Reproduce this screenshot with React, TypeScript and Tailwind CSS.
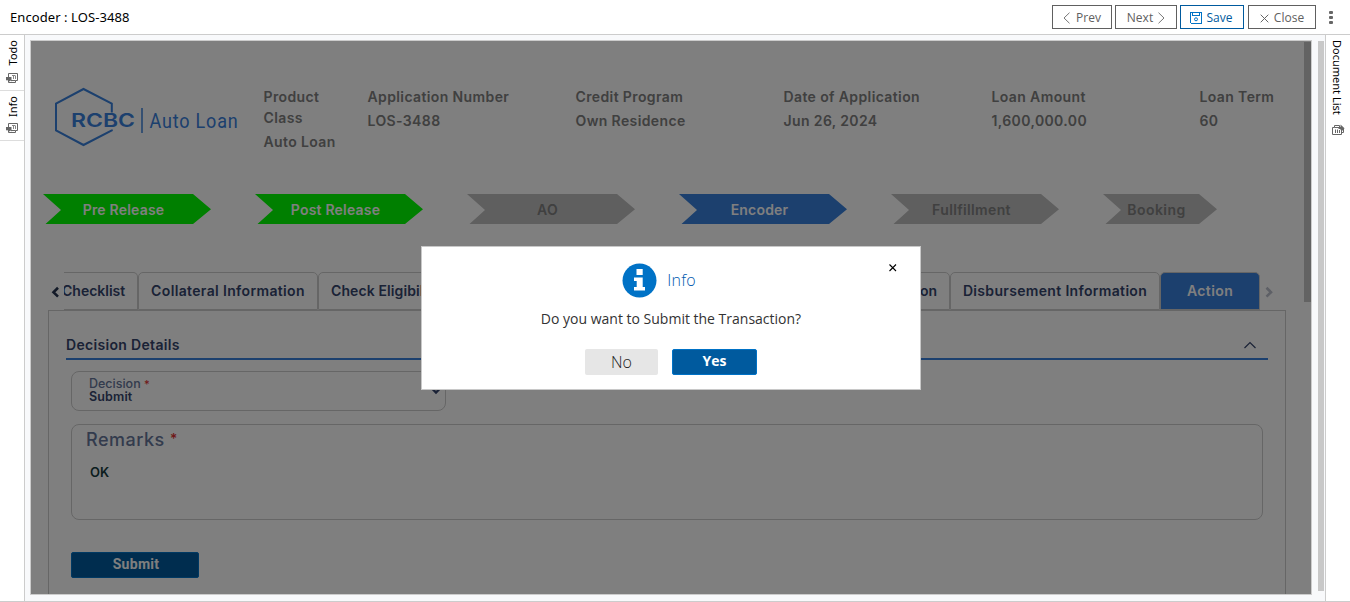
import React from "react";

const Chevron = ({ label, fill, text, width = 168 }: { label: string; fill: string; text: string; width?: number }) => (
  <div className="relative h-[30px] shrink-0" style={{ width }}>
    <svg className="absolute inset-0" width={width} height="30">
      <polygon className={fill} points={`0,0 ${width - 18},0 ${width},15.3 ${width - 18},30 2.5,30 18,16`} />
    </svg>
    <div className={`relative mr-[7px] text-center leading-8 ${text}`}>{label}</div>
  </div>
);

const Field = ({ label, value, width }: { label: string; value: string; width: string }) => (
  <div className={`${width} shrink-0`}>
    <div className="mb-[3px] leading-[21px]">{label}</div>
    <div className="leading-[21px]">{value}</div>
  </div>
);

const TabIcon = () => (
  <svg width="12" height="11" viewBox="0 0 12 11" className="fill-none stroke-[#666]" strokeWidth="1">
    <path d="M2.5 4V.5H11.5V7.5H9.5V9.5H2.5V7.5M5 7.5H9.5M.5 4.5V7" />
    <path d="M6 2.5H9.5M7.5 3V6M9.5 3V6" strokeWidth=".8" />
    <path className="fill-[#666]" stroke="none" d="M0 4H5.5V8.5L4.3 7.5L3 8.8L1.2 7L0 7.5Z" />
  </svg>
);

const DocIcon = () => (
  <svg width="13" height="12" viewBox="0 0 13 12" className="fill-none stroke-[#666]" strokeWidth="1">
    <path d="M2.5 3.5H.5V10.5H9.5V3.5H2.5M2.5 3.5V1.5H7.5V3.5M9.5 8.5H11.5V5" />
    <path d="M3.5 5.5V9M5.5 5.5V9M7.5 6V9" />
    <path className="fill-[#666]" stroke="none" d="M8.5 .5L12.5 4.2L11 6.5L8.5 6V5H6.5V3H8.5Z" />
  </svg>
);

const tab = "h-[38px] shrink-0 rounded-t-[5px] border border-[#ccc] text-center text-[14px] leading-[36px]";
const topButton = "flex h-6 items-center justify-center border border-[#606060] text-[12px] text-[#606060]";

export default function App() {
  return (
    <div className="flex h-[602px] w-[1350px] flex-col overflow-hidden border-b border-[#ccc] bg-white font-['Open_Sans',sans-serif]">
      <header className="flex h-[35px] shrink-0 items-center border-b border-[#ccc] pl-[10px]">
        <h1 className="pt-0.5 font-['Noto_Sans',sans-serif] text-[13px] tracking-[.08px] text-black">Encoder : LOS-3488</h1>
        <div className="ml-auto flex items-center">
          <button className={`${topButton} mr-[3px] w-[60px] gap-[6px]`}>
            <svg width="7" height="12" className="mt-0.5 fill-none stroke-[#777]"><path d="M6.5 .7L1 6L6.5 11.3" /></svg>
            <span className="pt-0.5">Prev</span>
          </button>
          <button className={`${topButton} mr-[3px] w-[62px] gap-[5px]`}>
            <span className="pt-0.5">Next</span>
            <svg width="7" height="12" className="mt-0.5 fill-none stroke-[#777]"><path d="M.5 .7L6 6L.5 11.3" /></svg>
          </button>
          <button className="mr-1 flex h-6 w-16 items-center justify-center gap-[5px] border border-[#005a9e] pr-0.5 text-[12px] text-[#005a9e]">
            <svg width="12" height="12" shapeRendering="crispEdges" className="mt-px fill-none stroke-[#0072c6]">
              <path d="M.5 .5H11.5V11.5H1.5L.5 10.5ZM2.5 .5V3.5H9.5V.5" /><circle cx="6" cy="7.3" r="1.5" shapeRendering="auto" />
            </svg>
            <span className="pt-0.5">Save</span>
          </button>
          <button className={`${topButton} w-[68px] gap-[5px]`}>
            <svg width="9" height="9" className="mt-0.5 fill-none stroke-[#666]"><path d="M.7 .7L8.3 8.3M8.3 .7L.7 8.3" /></svg>
            <span className="pt-0.5">Close</span>
          </button>
          <div className="ml-[13px] mr-[17px] flex w-1 flex-col gap-[2px]">
            <i className="h-[3px] w-[4px] rounded-[1px] bg-[#666]" />
            <i className="h-[3px] w-[4px] rounded-[1px] bg-[#666]" />
            <i className="h-[3px] w-[4px] rounded-[1px] bg-[#666]" />
          </div>
        </div>
      </header>

      <div className="flex min-h-0 flex-1">
        <aside className="w-[25px] shrink-0 border-r border-[#ccc] text-[11px] text-black">
          <div className="flex h-14 flex-col items-center justify-between border-b border-[#ddd] pt-[5px] pb-[6px]">
            <span className="ml-0.5 rotate-180 font-['Noto_Sans',sans-serif] leading-4 [writing-mode:vertical-rl]">Todo</span>
            <TabIcon />
          </div>
          <div className="flex h-[50px] flex-col items-center justify-between border-b border-[#ddd] pt-[5px] pb-[6px]">
            <span className="ml-0.5 rotate-180 font-['Noto_Sans',sans-serif] leading-4 [writing-mode:vertical-rl]">Info</span>
            <TabIcon />
          </div>
        </aside>

        <main className="flex min-w-0 flex-1 bg-[#f8f9fb] pt-[5px] pl-[5px]">
          <div className="relative h-[555px] w-[1282px] shrink-0 overflow-hidden border border-[#ccc] bg-white font-['Inter',sans-serif] font-semibold">
            <div className="flex h-[153px] pt-[45px] pl-[23px]">
              <svg width="186" height="62" className="shrink-0 fill-none stroke-[#3880dc] text-[#3880dc]">
                <path strokeWidth="2" d="M57.8 26.5V17.5L29.5 3L2 17.5V44.5L29.5 59L57.8 44.5V43.5" />
                <path strokeWidth="1.5" d="M88 22V47" />
                <text x="17" y="41" textLength="64" lengthAdjust="spacingAndGlyphs" stroke="none" className="fill-current font-['Inter'] text-[18.5px] font-semibold">RCBC</text>
                <text transform="translate(95.5 41.5) scale(.9 1)" textLength="98" stroke="none" className="fill-current font-['Roboto'] text-[20px] font-normal">Auto Loan</text>
              </svg>
              <div className="ml-[23.5px] flex text-[14px] tracking-[0.38px] text-[#808080]">
                <Field label="Product Class" value="Auto Loan" width="w-[104px] pr-5" />
                <Field label="Application Number" value="LOS-3488" width="w-[208px]" />
                <Field label="Credit Program" value="Own Residence" width="w-[208px]" />
                <Field label="Date of Application" value="Jun 26, 2024" width="w-[208px]" />
                <Field label="Loan Amount" value="1,600,000.00" width="w-[208px]" />
                <Field label="Loan Term" value="60" width="w-[80px]" />
              </div>
            </div>

            <div className="flex gap-[44px] pl-3 text-[14px] tracking-[.2px]">
              <Chevron label="Pre Release" fill="fill-[#00ff00]" text="text-white" />
              <Chevron label="Post Release" fill="fill-[#00ff00]" text="text-white" />
              <Chevron label="AO" fill="fill-[#bebebe]" text="text-[#808080]" />
              <Chevron label="Encoder" fill="fill-[#3880dc]" text="text-white" />
              <Chevron label="Fullfillment" fill="fill-[#bebebe]" text="text-[#808080] tracking-[.35px]" />
              <Chevron label="Booking" fill="fill-[#bebebe]" text="text-[#808080] tracking-[.45px]" width={114} />
            </div>

            <div className="mt-12 flex h-[38px] pl-[20px] text-[#35456d]">
              <svg width="8" height="12" className="mt-[14px] mr-[5px] shrink-0 fill-none stroke-[#263550]" strokeWidth="2.6"><path d="M7 1.8L2.5 6.2L7 10.6" /></svg>
              <div className="flex w-[1196px] overflow-hidden">
                <div className="h-[38px] w-[74px] shrink-0 rounded-tr-[5px] border-y border-r border-[#ccc] text-[14px] leading-[36px]"><span className="-ml-[2px]">Checklist</span></div>
                <div className={`${tab} w-[180px] tracking-[.35px]`}>Collateral Information</div>
                <div className={`${tab} w-[161px] pl-3 !text-left tracking-[.1px]`}>Check Eligibility</div>
                <div className={`${tab} w-[236px]`} />
                <div className={`${tab} w-[235px] pr-3 !text-right`}>Loan Information</div>
                <div className={`${tab} w-[210px] tracking-[.33px]`}>Disbursement Information</div>
                <div className={`${tab} w-[100px] border-[#bbb] bg-[#3880dc] tracking-[.4px] text-white`}>Action</div>
              </div>
              <svg width="9" height="12" className="mt-[14px] ml-[5px] shrink-0 fill-none stroke-[#bcc0cc]" strokeWidth="2.6"><path d="M1.5 1.8L6 6.2L1.5 10.6" /></svg>
            </div>

            <section className="ml-[17px] h-[300px] w-[1238px] border border-[#ccc] pl-[17px]">
              <div className="flex h-[49px] w-[1202px] items-end justify-between border-b-2 border-[#3880dc] pb-[2px] text-[14px] text-[#35456d]">
                <h2 className="tracking-[.32px] leading-[22px]">Decision Details</h2>
                <svg width="14" height="8" className="mr-[11px] mb-[7px] fill-none stroke-[#35456d]" strokeWidth="1.2"><path d="M1.5 7L7 1.5L12.5 7" /></svg>
              </div>
              <div className="mt-[11px] ml-[5px] flex h-10 w-[375px] items-center justify-between rounded-lg border border-[#ccc] pl-[17px] text-[12.5px] text-[#35456d]">
                <div className="pb-[2px] leading-[13px]">
                  <div className="font-medium text-[#66769a]">Decision <span className="text-[11px] text-[#e03030]">*</span></div>
                  <div className="-mt-px tracking-[.15px]">Submit</div>
                </div>
                <svg width="12" height="8" className="mr-[3px] fill-none stroke-[#35456d]" strokeWidth="2.4"><path d="M2 1.5L6 5.5L10 1.5" /></svg>
              </div>
              <div className="mt-[13px] ml-[5px] h-24 w-[1192px] rounded-lg border border-[#ccc] pt-[3px] pl-[14px]">
                <div className="text-[18px] leading-6 font-medium tracking-[.5px] text-[#66769a]">Remarks <span className="inline-block -translate-y-0.5 text-[14px] leading-4 text-[#e03030]">*</span></div>
                <div className="mt-[11px] ml-1 text-[13px] leading-[18px] text-[#173d3f]">OK</div>
              </div>
              <button className="mt-8 ml-[5px] h-[26px] w-32 rounded-[2px] border border-[#0072c6] bg-[#005a9e] pb-0.5 pl-0.5 font-['Roboto'] text-[14px] leading-[22px] font-bold tracking-[.3px] text-white">Submit</button>
            </section>

            <div className="absolute top-px right-0 h-[260px] w-[7px] bg-[#c6c6c6]" />
            <div className="absolute inset-0 bg-black/50" />

            <div role="dialog" className="absolute top-[205px] left-[390px] flex h-[144px] w-[500px] flex-col items-center border border-[#c8c8c8] bg-white font-['Open_Sans',sans-serif] font-normal">
              <div className="mt-4 flex h-[35px] items-center gap-[10px] pr-[24px]">
                <svg width="35" height="35" className="fill-[#0072c6]">
                  <circle cx="17.5" cy="17.5" r="17" />
                  <path className="fill-white" d="M14.5 6H20.7V12H14.5ZM12 14.5H20.7V24H23V27.5H12V24H14.7V18H12Z" />
                </svg>
                <h3 className="pb-0.5 text-[16px] font-light tracking-[.2px] text-[#0058ae]">Info</h3>
              </div>
              <p className="mt-[11px] text-[14px] leading-5 text-[#333]">Do you want to Submit the Transaction?</p>
              <div className="mt-[20px] flex gap-[14px]">
                <button className="h-[26px] w-[73px] rounded-[2px] bg-[#e6e6e6] text-[16px] leading-[26px] font-light text-[#222]">No</button>
                <button className="h-[26px] w-[85px] rounded-[2px] border border-[#0072c6] bg-[#005a9e] pb-0.5 text-[14px] leading-[22px] font-bold text-white">Yes</button>
              </div>
              <svg width="9" height="9" className="absolute top-4 right-[23px] fill-none stroke-black" strokeWidth="1.1"><path d="M1.5 1.5L8 8M8 1.5L1.5 8" /></svg>
            </div>
          </div>
          <div className="mt-px ml-[6px] h-[550px] w-[6px] bg-[#c8c8c8]" />
        </main>

        <aside className="flex w-[25px] shrink-0 flex-col items-center border-l border-[#ccc] pt-[5px]">
          <span className="mr-0.5 font-['Noto_Sans',sans-serif] text-[11px] leading-4 text-black [writing-mode:vertical-rl]">Document List</span>
          <div className="mt-[9px]"><DocIcon /></div>
        </aside>
      </div>
    </div>
  );
}
